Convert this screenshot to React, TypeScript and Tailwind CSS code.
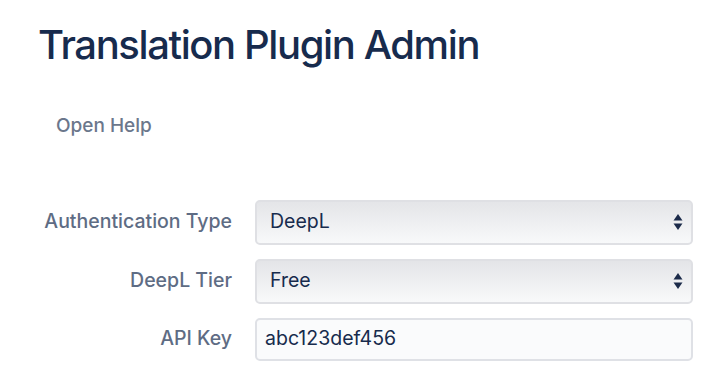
const Updown = () => (
  <svg width="10" height="18" viewBox="0 0 10 18" className="shrink-0">
    <path d="M5 1 L9.5 7.5 H0.5 Z" fill="#1c2b4a" />
    <path d="M5 17 L9.5 10.5 H0.5 Z" fill="#1c2b4a" />
  </svg>
);

const FakeSelect = ({ value }: { value: string }) => (
  <div className="flex h-[45px] w-[438px] items-center justify-between rounded-[5px] border-2 border-[#dfe0e4] bg-gradient-to-b from-[#e4e5e8] to-[#f8f9fa] pl-[13px] pr-[8px] text-[19.5px] text-[#172b4d]">
    <span>{value}</span>
    <Updown />
  </div>
);

const Row = ({ label, children }: { label: string; children: React.ReactNode }) => (
  <div className="flex items-center">
    <div className="w-[217px] shrink-0 whitespace-nowrap pr-[23px] text-right text-[19.5px] font-medium text-[#5e6c84]">
      {label}
    </div>
    {children}
  </div>
);

export default function App() {
  return (
    <div
      className="h-[369px] w-[719px] overflow-hidden bg-white pl-[38px] pt-[25px]"
      style={{ fontFamily: "Inter, 'Liberation Sans', sans-serif" }}
    >
      <h1 className="text-[40px] font-medium leading-none tracking-[-1.4px] text-[#172b4d]">
        Translation Plugin Admin
      </h1>
      <div className="mt-[47px] pl-[18px] text-[19px] font-medium text-[#6b778c]">
        Open Help
      </div>
      <div className="mt-[59px] flex flex-col gap-[14px]">
        <Row label="Authentication Type">
          <FakeSelect value="DeepL" />
        </Row>
        <Row label="DeepL Tier">
          <FakeSelect value="Free" />
        </Row>
        <Row label="API Key">
          <div className="flex h-[43px] w-[438px] items-center rounded-[5px] border-2 border-[#dfe1e6] bg-[#fafbfc] pl-[8px] text-[19.5px] text-[#172b4d]">
            abc123def456
          </div>
        </Row>
      </div>
    </div>
  );
}
